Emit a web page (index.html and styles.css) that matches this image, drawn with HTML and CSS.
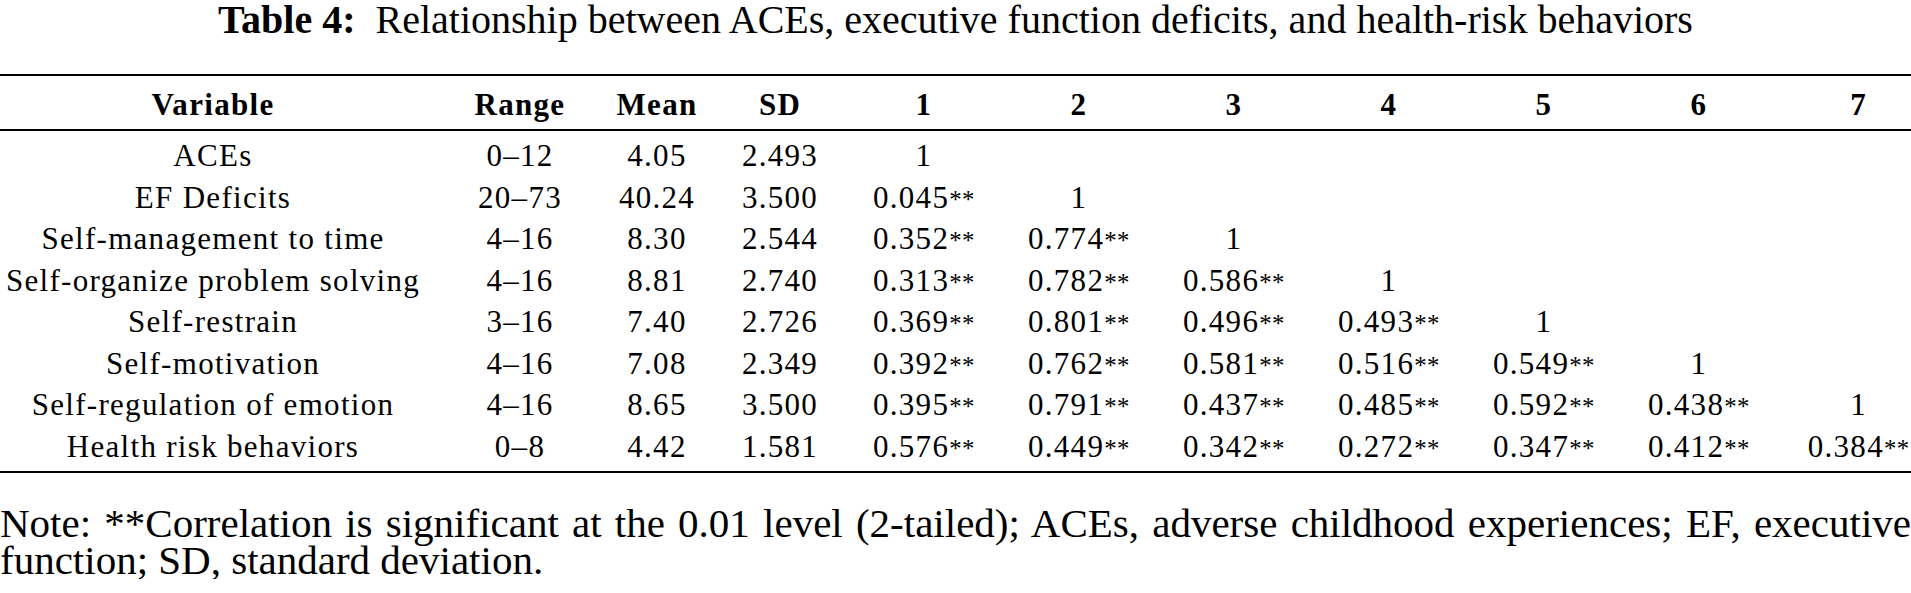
FILE: index.html
```html
<!DOCTYPE html>
<html lang="en">
<head>
<meta charset="utf-8">
<title>Table 4</title>
<link rel="stylesheet" href="styles.css">
</head>
<body>
<div class="page">
  <h1 class="caption"><span class="label">Table 4:</span>Relationship between ACEs, executive function deficits, and health-risk behaviors</h1>
  <table class="corr">
    <thead>
      <tr>
        <th class="c-var">Variable</th>
        <th class="c-range">Range</th>
        <th class="c-mean">Mean</th>
        <th class="c-sd">SD</th>
        <th class="c-r">1</th>
        <th class="c-r">2</th>
        <th class="c-r">3</th>
        <th class="c-r">4</th>
        <th class="c-r">5</th>
        <th class="c-r">6</th>
        <th class="c-last">7</th>
      </tr>
    </thead>
    <tbody>
      <tr><td class="c-var">ACEs</td><td>0–12</td><td>4.05</td><td>2.493</td><td>1</td><td></td><td></td><td></td><td></td><td></td><td class="c-last"></td></tr>
      <tr><td class="c-var">EF Deficits</td><td>20–73</td><td>40.24</td><td>3.500</td><td>0.045<span class="sig">**</span></td><td>1</td><td></td><td></td><td></td><td></td><td class="c-last"></td></tr>
      <tr><td class="c-var">Self-management to time</td><td>4–16</td><td>8.30</td><td>2.544</td><td>0.352<span class="sig">**</span></td><td>0.774<span class="sig">**</span></td><td>1</td><td></td><td></td><td></td><td class="c-last"></td></tr>
      <tr><td class="c-var">Self-organize problem solving</td><td>4–16</td><td>8.81</td><td>2.740</td><td>0.313<span class="sig">**</span></td><td>0.782<span class="sig">**</span></td><td>0.586<span class="sig">**</span></td><td>1</td><td></td><td></td><td class="c-last"></td></tr>
      <tr><td class="c-var">Self-restrain</td><td>3–16</td><td>7.40</td><td>2.726</td><td>0.369<span class="sig">**</span></td><td>0.801<span class="sig">**</span></td><td>0.496<span class="sig">**</span></td><td>0.493<span class="sig">**</span></td><td>1</td><td></td><td class="c-last"></td></tr>
      <tr><td class="c-var">Self-motivation</td><td>4–16</td><td>7.08</td><td>2.349</td><td>0.392<span class="sig">**</span></td><td>0.762<span class="sig">**</span></td><td>0.581<span class="sig">**</span></td><td>0.516<span class="sig">**</span></td><td>0.549<span class="sig">**</span></td><td>1</td><td class="c-last"></td></tr>
      <tr><td class="c-var">Self-regulation of emotion</td><td>4–16</td><td>8.65</td><td>3.500</td><td>0.395<span class="sig">**</span></td><td>0.791<span class="sig">**</span></td><td>0.437<span class="sig">**</span></td><td>0.485<span class="sig">**</span></td><td>0.592<span class="sig">**</span></td><td>0.438<span class="sig">**</span></td><td class="c-last">1</td></tr>
      <tr><td class="c-var">Health risk behaviors</td><td>0–8</td><td>4.42</td><td>1.581</td><td>0.576<span class="sig">**</span></td><td>0.449<span class="sig">**</span></td><td>0.342<span class="sig">**</span></td><td>0.272<span class="sig">**</span></td><td>0.347<span class="sig">**</span></td><td>0.412<span class="sig">**</span></td><td class="c-last">0.384<span class="sig">**</span></td></tr>
    </tbody>
  </table>
  <p class="note">Note: **Correlation is significant at the 0.01 level (2-tailed); ACEs, adverse childhood experiences; EF, executive function; SD, standard deviation.</p>
</div>
</body>
</html>
```

FILE: styles.css
```css
html, body {
  margin: 0;
  padding: 0;
  background: #ffffff;
}

body {
  color: #000000;
  font-family: "Liberation Serif", "Times New Roman", serif;
}

.page {
  width: 1911px;
}

.caption {
  margin: 0;
  font-size: 40px;
  font-weight: normal;
  line-height: 40px;
  text-align: center;
}

.caption .label {
  font-weight: bold;
  margin-right: 0.5em;
}

.corr {
  margin-top: 34px;
  width: 1911px;
  table-layout: fixed;
  border-collapse: separate;
  border-spacing: 0;
  font-size: 31px;
  letter-spacing: 1.3px;
}

.corr th,
.corr td {
  box-sizing: border-box;
  padding: 0;
  text-align: center;
  white-space: nowrap;
}

.corr th {
  font-weight: bold;
  line-height: 36px;
  padding-top: 10.5px;
  padding-bottom: 6.5px;
  border-top: 2px solid #000;
  border-bottom: 2px solid #000;
}

.corr td {
  line-height: 41.5px;
}

.corr tbody tr:first-child td {
  padding-top: 4px;
}

.corr tbody tr:last-child td {
  padding-bottom: 4px;
  border-bottom: 2px solid #000;
}

.corr .sig {
  font-size: 0.8em;
  line-height: 1;
  letter-spacing: 0.5px;
}

.corr .c-var { width: 439.5px; padding-right: 13.5px; }
.corr .c-range { width: 161px; }
.corr .c-mean { width: 113px; }
.corr .c-sd { width: 133px; }
.corr .c-r { width: 155px; }
.corr .c-last { width: 134.5px; padding-left: 30px; }

.note {
  margin: 32px 0 0;
  font-size: 41px;
  line-height: 37px;
  text-align: justify;
}
```
